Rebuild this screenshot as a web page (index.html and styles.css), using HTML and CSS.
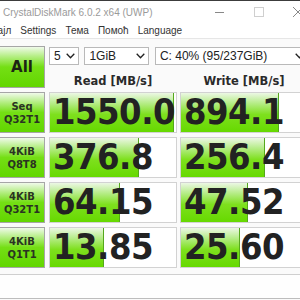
FILE: index.html
```html
<!DOCTYPE html>
<html lang="sr">
<head>
  <meta charset="UTF-8">
  <title>CrystalDiskMark 6.0.2 x64 (UWP)</title>
  <link rel="stylesheet" href="styles.css">
</head>
<body>
  <div class="window">
    <header class="titlebar">
      <span class="title">CrystalDiskMark 6.0.2 x64 (UWP)</span>
      <div class="controls">
        <svg class="ctl ctl-min" width="10" height="12" viewBox="0 0 10 12"><path d="M0 6.5h9" stroke="#888" stroke-width="1"/></svg>
        <svg class="ctl ctl-max" width="12" height="12" viewBox="0 0 12 12"><rect x="1.5" y="1.5" width="9" height="9" fill="none" stroke="#cfcfcf" stroke-width="1"/></svg>
        <svg class="ctl ctl-close" width="12" height="12" viewBox="0 0 12 12"><path d="M1 1l10 10M11 1L1 11" stroke="#888" stroke-width="1"/></svg>
      </div>
    </header>

    <nav class="menu">
      <span class="item first">Фајл</span>
      <span class="item">Settings</span>
      <span class="item">Тема</span>
      <span class="item">Помоћ</span>
      <span class="item">Language</span>
    </nav>

    <main class="board">
      <button class="run all">All</button>
      <div class="setup">
        <div class="selects">
          <div class="select sel-count">5 <svg class="chev" width="9" height="6" viewBox="0 0 9 6"><path d="M0.7 0.8L4.5 4.8L8.3 0.8" fill="none" stroke="#222" stroke-width="1.3"/></svg></div>
          <div class="select sel-size">1GiB <svg class="chev" width="9" height="6" viewBox="0 0 9 6"><path d="M0.7 0.8L4.5 4.8L8.3 0.8" fill="none" stroke="#222" stroke-width="1.3"/></svg></div>
          <div class="select sel-drive">C: 40% (95/237GiB) <svg class="chev" width="9" height="6" viewBox="0 0 9 6"><path d="M0.7 0.8L4.5 4.8L8.3 0.8" fill="none" stroke="#222" stroke-width="1.3"/></svg></div>
        </div>
        <div class="heads">
          <div class="head">Read [MB/s]</div>
          <div class="head">Write [MB/s]</div>
        </div>
      </div>

      <button class="run">Seq<br>Q32T1</button>
      <div class="cell"><div class="bar" style="width: 98%"></div><span class="value">1550.0</span></div>
      <div class="cell"><div class="bar" style="width: 77%"></div><span class="value">894.1</span></div>

      <button class="run">4KiB<br>Q8T8</button>
      <div class="cell"><div class="bar" style="width: 70%"></div><span class="value">376.8</span></div>
      <div class="cell"><div class="bar" style="width: 66%"></div><span class="value">256.4</span></div>

      <button class="run">4KiB<br>Q32T1</button>
      <div class="cell"><div class="bar" style="width: 55%"></div><span class="value">64.15</span></div>
      <div class="cell"><div class="bar" style="width: 52%"></div><span class="value">47.52</span></div>

      <button class="run">4KiB<br>Q1T1</button>
      <div class="cell"><div class="bar" style="width: 42%"></div><span class="value">13.85</span></div>
      <div class="cell"><div class="bar" style="width: 46%"></div><span class="value">25.60</span></div>
    </main>

    <div class="comment"></div>
  </div>
</body>
</html>
```

FILE: styles.css
```css
html, body {
  margin: 0;
  padding: 0;
  width: 300px;
  height: 300px;
  overflow: hidden;
  background: #fafafa;
}
body {
  font-family: 'Liberation Sans', Arial, sans-serif;
  color: #222;
}
.window {
  width: 330px;
  border-top: 1px solid #3c3c3c;
}
.titlebar {
  width: 300px;
  height: 22px;
  background: #fff;
  display: flex;
  align-items: center;
}
.title {
  margin-left: 3px;
  font-size: 10px;
  color: #9a9a9a;
}
.controls {
  display: flex;
  align-items: center;
  margin-left: auto;
  margin-right: -4px;
}
.ctl { display: block; flex-shrink: 0; }
.ctl-min { margin-right: 28px; }
.ctl-max { margin-right: 27px; }
.menu {
  height: 15px;
  background: #fff;
  border-bottom: 1px solid #e6e6e6;
  display: flex;
  align-items: center;
  gap: 9px;
  font-size: 10px;
  color: #333;
}
.menu .first { margin-left: -10px; }

.board {
  display: grid;
  grid-template-columns: 46px 128px 128px;
  grid-template-rows: 42px repeat(4, 41px);
  column-gap: 3px;
  row-gap: 4px;
  margin-top: 7px;
}
.run {
  width: 45px;
  margin: 0;
  padding: 0;
  border: 1px solid #a6a6a6;
  border-left: none;
  border-radius: 0;
  background: linear-gradient(#f0faea 0%, #b8ef8a 22%, #74df14 50%, #62d600 100%);
  font-family: 'DejaVu Sans', Verdana, sans-serif;
  font-weight: bold;
  font-size: 10px;
  line-height: 13px;
  color: #2a3322;
}
.run.all { font-size: 15px; color: #1c2414; }

.setup {
  grid-column: 2 / 4;
  display: flex;
  flex-direction: column;
}
.selects {
  display: flex;
  gap: 5px;
  margin-top: 1px;
}
.select {
  height: 16px;
  border: 1px solid #b9b9b9;
  background: #fff;
  display: flex;
  align-items: center;
  justify-content: space-between;
  padding: 0 3px 0 4px;
  font-size: 12px;
  color: #222;
}
.sel-count { width: 22px; }
.sel-size { width: 57px; }
.sel-drive { width: 148px; margin-left: 1px; }
.heads {
  display: flex;
  gap: 3px;
  margin-top: 9px;
}
.head {
  width: 128px;
  text-align: center;
  font-family: 'DejaVu Sans', Verdana, sans-serif;
  font-weight: bold;
  font-size: 11.5px;
  color: #2a2a2a;
}

.cell {
  position: relative;
  background: #fff;
  border: 1px solid #d2d2d2;
  box-sizing: border-box;
  overflow: hidden;
  display: flex;
  align-items: center;
}
.bar {
  position: absolute;
  left: 0;
  top: 0;
  bottom: 0;
  background: linear-gradient(#ecf7e4 0%, #b8ed8c 25%, #7ee01e 55%, #66d900 100%);
  border-right: 1px solid #55a81c;
}
.value {
  position: relative;
  margin-left: 3px;
  margin-top: -3px;
  font-family: 'DejaVu Sans', Verdana, sans-serif;
  font-stretch: condensed;
  font-weight: bold;
  font-size: 36px;
  letter-spacing: -0.5px;
  color: #222;
}

.comment {
  margin-top: 6px;
  height: 23px;
  background: #fefefe;
  border-top: 1px solid #cfcfcf;
  border-bottom: 1px solid #bdbdbd;
}
```
